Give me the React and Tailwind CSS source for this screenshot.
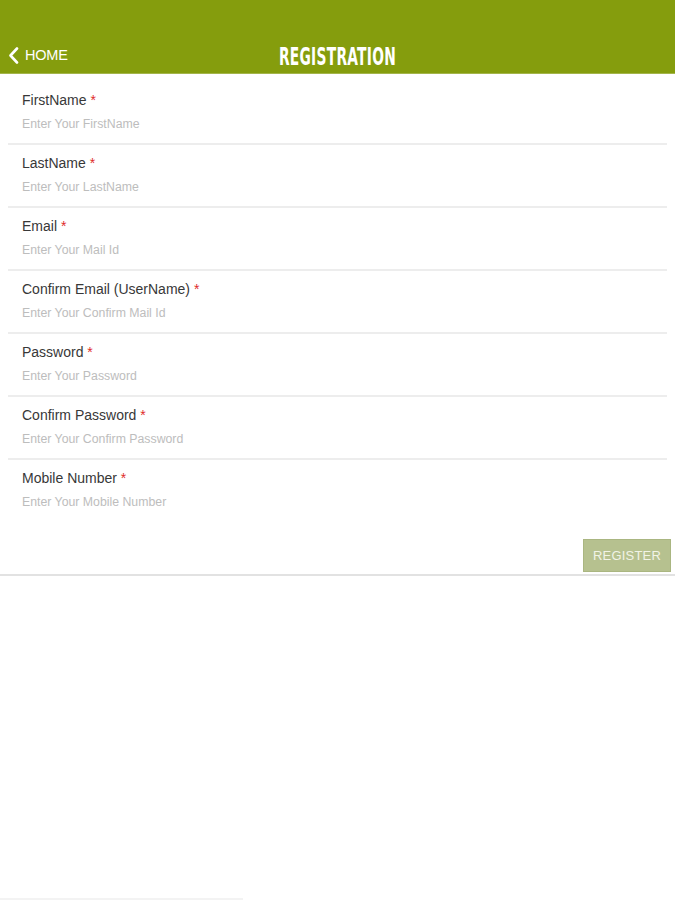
import React from "react";

const fields = [
  { label: "FirstName", placeholder: "Enter Your FirstName" },
  { label: "LastName", placeholder: "Enter Your LastName" },
  { label: "Email", placeholder: "Enter Your Mail Id" },
  { label: "Confirm Email (UserName)", placeholder: "Enter Your Confirm Mail Id" },
  { label: "Password", placeholder: "Enter Your Password" },
  { label: "Confirm Password", placeholder: "Enter Your Confirm Password" },
  { label: "Mobile Number", placeholder: "Enter Your Mobile Number" },
];

const Header = () => (
  <div className="relative h-[74px] bg-[#859d0d] border-b border-[#a3b54a]">
    <div className="absolute left-[8px] top-[45px] flex items-center gap-[6px] text-white">
      <svg width="11" height="17" viewBox="0 0 11 17" fill="none">
        <polyline
          points="9,1.5 2.5,8.5 9,15.5"
          stroke="white"
          strokeWidth="2.6"
          strokeLinecap="round"
          strokeLinejoin="round"
        />
      </svg>
      <span className="text-[14.5px] leading-5 tracking-[-0.2px]">HOME</span>
    </div>
    <div className="absolute inset-x-0 top-[42px] flex justify-center">
      <span className="font-['Liberation_Sans_Narrow','DejaVu_Sans_Condensed','Liberation_Sans',sans-serif] font-bold text-[24px] leading-[30px] text-white scale-x-[0.64] tracking-[0.4px]">
        REGISTRATION
      </span>
    </div>
  </div>
);

const Field = ({ label, placeholder, first, last }) => (
  <div
    className={`mx-[8px] px-[14px] ${first ? "pt-[16px]" : "pt-[8px]"} pb-[11px] ${
      last ? "" : "border-b-2 border-[#ededed]"
    }`}
  >
    <div className="text-[14px] leading-5 text-[#383838]">
      {label} <span className="text-[#e02b2b]">*</span>
    </div>
    <input
      type="text"
      placeholder={placeholder}
      className="mt-[6px] block w-full h-4 text-[12.3px] leading-4 text-[#555] placeholder:text-[#bdbdbd] outline-none bg-transparent"
    />
  </div>
);

export default function App() {
  return (
    <div className="min-h-[900px] flex flex-col bg-white font-['Liberation_Sans',Arial,sans-serif]">
      <Header />
      <form onSubmit={(e) => e.preventDefault()}>
        {fields.map((f, i) => (
          <Field
            key={f.label}
            label={f.label}
            placeholder={f.placeholder}
            first={i === 0}
            last={i === fields.length - 1}
          />
        ))}
        <div className="flex justify-end pr-[4px] pt-[18px] pb-[2px] border-b-2 border-[#e2e2e2]">
          <button
            type="submit"
            className="w-[88px] h-[33px] bg-[#b6c18f] border border-[#aab681] text-[13px] text-[#f1f3e6] tracking-[0.2px]"
          >
            REGISTER
          </button>
        </div>
      </form>
      <div className="mt-auto w-[243px] h-[2px] bg-[#f3f3f3]" />
    </div>
  );
}
